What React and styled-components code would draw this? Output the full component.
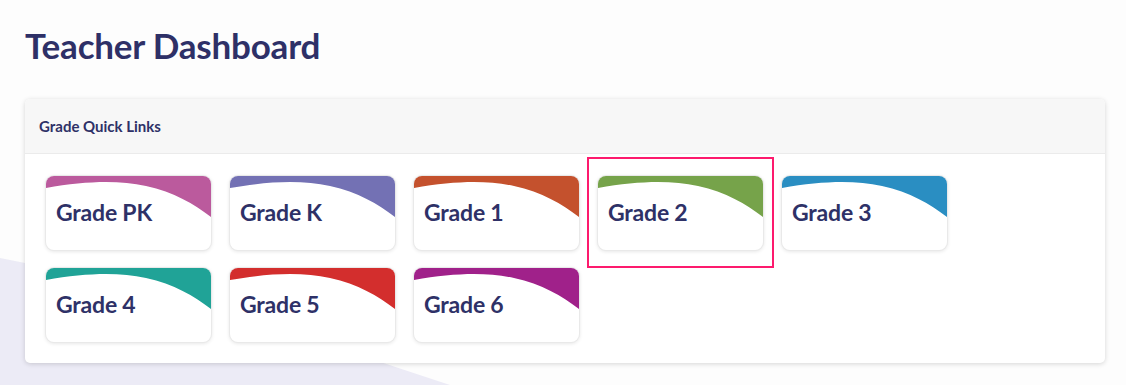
import React from "react";
import styled, { createGlobalStyle } from "styled-components";

const GlobalStyle = createGlobalStyle`
  html, body { margin: 0; padding: 0; }
  body {
    background: #fdfdfd;
    font-family: "Lato", "Liberation Sans", sans-serif;
    color: #2e3167;
  }
`;

const Page = styled.div`
  position: relative;
  min-height: 385px;
  overflow: hidden;
  padding: 22px 21px 0 25px;
  box-sizing: border-box;
`;

const Backdrop = styled.div`
  position: absolute;
  inset: 0;
  background: #ecebf6;
  clip-path: polygon(0 258px, 165px 291px, 450px 385px, 0 385px);
  z-index: 0;
`;

const Content = styled.div`
  position: relative;
  z-index: 1;
`;

const Title = styled.h1`
  margin: 0 0 31px;
  font-size: 35px;
  line-height: 46px;
  font-weight: 700;
  color: #2e3067;
  letter-spacing: -0.2px;
`;

const Card = styled.section`
  background: #fff;
  border-radius: 5px;
  box-shadow: 0 1px 5px rgba(0, 0, 0, 0.16);
`;

const CardHeader = styled.header`
  height: 54px;
  display: flex;
  align-items: center;
  padding: 0 14px;
  background: #f7f7f7;
  border-bottom: 1px solid #ebebeb;
  border-radius: 5px 5px 0 0;
  font-size: 15px;
  font-weight: 700;
  color: #2e3167;
`;

const Grid = styled.div`
  display: grid;
  grid-template-columns: repeat(5, 165px);
  column-gap: 19px;
  row-gap: 18px;
  padding: 22px 21px 21px;
`;

const Tile = styled.a`
  position: relative;
  display: block;
  height: 74px;
  background: #fff;
  border-radius: 8px;
  box-shadow: 0 0 0 1px #e9e9e9, 0 1px 4px rgba(0, 0, 0, 0.14);
  text-decoration: none;
  cursor: pointer;

  ${(p) =>
    p.$highlighted &&
    `
    &::after {
      content: "";
      position: absolute;
      inset: -19px -11px -18px -11px;
      border: 2px solid #fd1a6d;
      pointer-events: none;
    }
  `}
`;

const Wave = styled.svg`
  position: absolute;
  top: 0;
  left: 0;
  width: 100%;
  height: 100%;
  border-radius: 8px;
  overflow: hidden;
`;

const TileLabel = styled.span`
  position: relative;
  display: block;
  padding: 20px 0 0 10px;
  font-size: 23px;
  line-height: 32px;
  font-weight: 700;
  color: #2e3167;
  letter-spacing: -0.2px;
`;

const grades = [
  { label: "Grade PK", color: "#bb5a9d" },
  { label: "Grade K", color: "#7371b4" },
  { label: "Grade 1", color: "#c4512d" },
  { label: "Grade 2", color: "#76a34a", highlighted: true },
  { label: "Grade 3", color: "#2a8ec2" },
  { label: "Grade 4", color: "#20a397" },
  { label: "Grade 5", color: "#d32e2d" },
  { label: "Grade 6", color: "#a0218a" },
];

function GradeTile({ label, color, highlighted }) {
  return (
    <Tile $highlighted={highlighted}>
      <Wave viewBox="0 0 165 74" preserveAspectRatio="none">
        <path
          d="M0 0 H165 V41 C148 28 128 16 100 10 C72 4 40 5 0 12 Z"
          fill={color}
        />
      </Wave>
      <TileLabel>{label}</TileLabel>
    </Tile>
  );
}

export default function App() {
  return (
    <>
      <GlobalStyle />
      <Page>
        <Backdrop />
        <Content>
          <Title>Teacher Dashboard</Title>
          <Card>
            <CardHeader>Grade Quick Links</CardHeader>
            <Grid>
              {grades.map((g) => (
                <GradeTile key={g.label} {...g} />
              ))}
            </Grid>
          </Card>
        </Content>
      </Page>
    </>
  );
}
